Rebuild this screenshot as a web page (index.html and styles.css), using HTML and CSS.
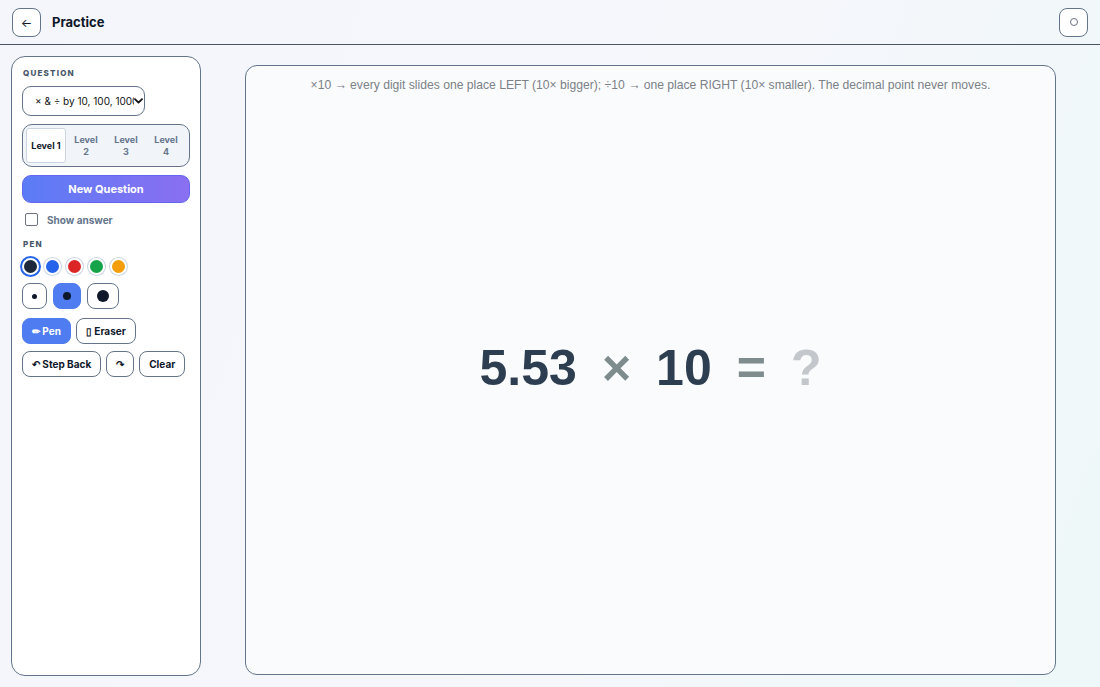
FILE: index.html
```html
<!DOCTYPE html>
<html lang="en">
<head>
<meta charset="utf-8">
<title>Practice</title>
<link rel="stylesheet" href="styles.css">
</head>
<body>
<div class="app">
  <header class="topbar">
    <button class="icon-btn" aria-label="Back">←</button>
    <h1 class="title">Practice</h1>
    <span class="spacer"></span>
    <button class="icon-btn ring-btn" aria-label="Theme"><span class="ring"></span></button>
  </header>

  <div class="workspace">
    <aside class="sidebar">
      <div class="section-label">Question</div>
      <div class="picker">
        <span class="picker-text">× &amp; ÷ by 10, 100, 1000</span>
        <svg class="chev" width="9" height="6" viewBox="0 0 9 6"><path d="M1 1.2 L4.5 4.6 L8 1.2" fill="none" stroke="#111" stroke-width="1.8" stroke-linecap="round" stroke-linejoin="round"/></svg>
      </div>

      <div class="levels">
        <button class="level active">Level 1</button>
        <button class="level">Level<br>2</button>
        <button class="level">Level<br>3</button>
        <button class="level">Level<br>4</button>
      </div>

      <button class="primary">New Question</button>

      <label class="check">
        <span class="box"></span>
        <span>Show answer</span>
      </label>

      <div class="section-label pen-label">Pen</div>
      <div class="swatches">
        <span class="swatch selected" style="background:#1e293b"></span>
        <span class="swatch" style="background:#2563eb"></span>
        <span class="swatch" style="background:#dc2626"></span>
        <span class="swatch" style="background:#16a34a"></span>
        <span class="swatch" style="background:#f59e0b"></span>
      </div>

      <div class="sizes">
        <button class="size"><span class="dot d1"></span></button>
        <button class="size on"><span class="dot d2"></span></button>
        <button class="size"><span class="dot d3"></span></button>
      </div>

      <div class="row">
        <button class="tool on">✏ Pen</button>
        <button class="tool">▯ Eraser</button>
      </div>

      <div class="row">
        <button class="tool">↶ Step Back</button>
        <button class="tool">↷</button>
        <button class="tool">Clear</button>
      </div>
    </aside>

    <main class="board">
      <p class="hint">×10 → every digit slides one place LEFT (10× bigger); ÷10 → one place RIGHT (10× smaller). The decimal point never moves.</p>
      <div class="equation">
        <span class="num">5.53</span>
        <span class="op">×</span>
        <span class="num">10</span>
        <span class="op">=</span>
        <span class="ask">?</span>
      </div>
    </main>
  </div>
</div>
</body>
</html>
```

FILE: styles.css
```css
* { box-sizing: border-box; }

html, body {
  margin: 0;
  height: 100%;
}

body {
  font-family: Inter, "Noto Sans", sans-serif;
  color: #0f172a;
  background: linear-gradient(110deg, #f4f6fb 0%, #f5f7fb 60%, #eef8f8 100%);
}

button {
  font-family: inherit;
  cursor: pointer;
}

.app {
  height: 100vh;
  display: flex;
  flex-direction: column;
}

/* top bar */
.topbar {
  height: 45px;
  flex: none;
  display: flex;
  align-items: center;
  padding: 0 12px;
  gap: 11px;
  border-bottom: 1px solid #4b5563;
}

.icon-btn {
  width: 29px;
  height: 29px;
  border: 1px solid #64748b;
  border-radius: 8px;
  background: #fff;
  color: #0f172a;
  font-size: 12px;
  display: flex;
  align-items: center;
  justify-content: center;
  padding: 0;
}

.ring {
  width: 8px;
  height: 8px;
  border: 1px solid #6b7280;
  border-radius: 50%;
}

.title {
  margin: 0;
  font-size: 13px;
  font-weight: 700;
}

.spacer { flex: 1; }

/* body area */
.workspace {
  flex: 1;
  display: flex;
  padding: 11px 0 11px 11px;
  min-height: 0;
}

.sidebar {
  width: 190px;
  flex: none;
  background: #fff;
  border: 1px solid #64748b;
  border-radius: 14px;
  padding: 11px 10px;
  display: flex;
  flex-direction: column;
}

.section-label {
  font-size: 8px;
  font-weight: 800;
  letter-spacing: 1.2px;
  text-transform: uppercase;
  color: #475569;
  margin-left: 1px;
}

.picker {
  margin-top: 8px;
  width: 123px;
  height: 30px;
  border: 1px solid #64748b;
  border-radius: 9px;
  display: flex;
  align-items: center;
  padding: 0 1px 0 12px;
  font-size: 10px;
  color: #111;
}

.picker-text {
  flex: 1;
  white-space: nowrap;
  overflow: hidden;
}

.chev { flex: none; }

.levels {
  margin-top: 8px;
  display: grid;
  grid-template-columns: repeat(4, 1fr);
  border: 1px solid #64748b;
  border-radius: 10px;
  background: #f1f5f9;
  padding: 3px 3px;
  height: 43px;
}

.level {
  border: 1px solid transparent;
  background: transparent;
  border-radius: 3px;
  font-size: 9px;
  font-weight: 700;
  line-height: 12px;
  color: #64748b;
  padding: 0;
}

.level.active {
  background: #fff;
  border-color: #cbd5e1;
  color: #0f172a;
}

.primary {
  margin-top: 8px;
  height: 28px;
  border: 1px solid #6366f1;
  border-radius: 9px;
  background: linear-gradient(90deg, #5b7cf6 0%, #8a6ff1 100%);
  color: #fff;
  font-size: 11px;
  font-weight: 700;
}

.check {
  margin-top: 10px;
  display: flex;
  align-items: center;
  gap: 9px;
  padding-left: 3px;
  font-size: 10px;
  font-weight: 700;
  color: #64748b;
}

.box {
  width: 13px;
  height: 13px;
  border: 1px solid #6b7280;
  border-radius: 2px;
  background: #fff;
}

.pen-label { margin-top: 13px; }

.swatches {
  margin-top: 9px;
  display: flex;
  gap: 5px;
}

.swatch {
  width: 17px;
  height: 17px;
  border-radius: 50%;
  border: 2px solid #fff;
  box-shadow: 0 0 0 1px #cbd5e1;
}

.swatch.selected {
  box-shadow: 0 0 0 2px #2563eb;
}

.sizes {
  margin-top: 8px;
  display: flex;
  gap: 6px;
}

.size {
  border: 1px solid #64748b;
  border-radius: 8px;
  background: #fff;
  padding: 6px 9px;
  display: flex;
  align-items: center;
  justify-content: center;
}

.size.on {
  background: #4f7cf0;
  border-color: #4f7cf0;
}

.dot {
  display: block;
  border-radius: 50%;
  background: #0f172a;
}

.d1 { width: 5px; height: 5px; }
.d2 { width: 8px; height: 8px; }
.d3 { width: 12px; height: 12px; }

.row {
  margin-top: 9px;
  display: flex;
  gap: 5px;
}

.row + .row { margin-top: 7px; }

.tool {
  height: 26px;
  border: 1px solid #64748b;
  border-radius: 8px;
  background: #fff;
  color: #0f172a;
  font-size: 10px;
  font-weight: 700;
  padding: 0 9px;
}

.tool.on {
  background: #4f7cf0;
  border-color: #4f7cf0;
  color: #fff;
}

/* drawing board */
.board {
  flex: 1;
  max-width: 811px;
  margin: 9px auto 1px;
  background: #fafbfd;
  border: 1px solid #64748b;
  border-radius: 12px;
  display: grid;
  justify-items: center;
  font-family: "Liberation Sans", Arial, sans-serif;
}

.hint,
.equation {
  grid-area: 1 / 1;
}

.hint {
  align-self: start;
  margin: 12px 0 0;
  font-size: 12.15px;
  color: #7b8187;
}

.equation {
  align-self: center;
  display: flex;
  align-items: center;
  gap: 25px;
  font-size: 50px;
  font-weight: 700;
  margin-top: -4px;
}

.num { color: #2c3e50; }
.op { color: #7f8c8d; }
.ask { color: #c3c7cb; }
```
